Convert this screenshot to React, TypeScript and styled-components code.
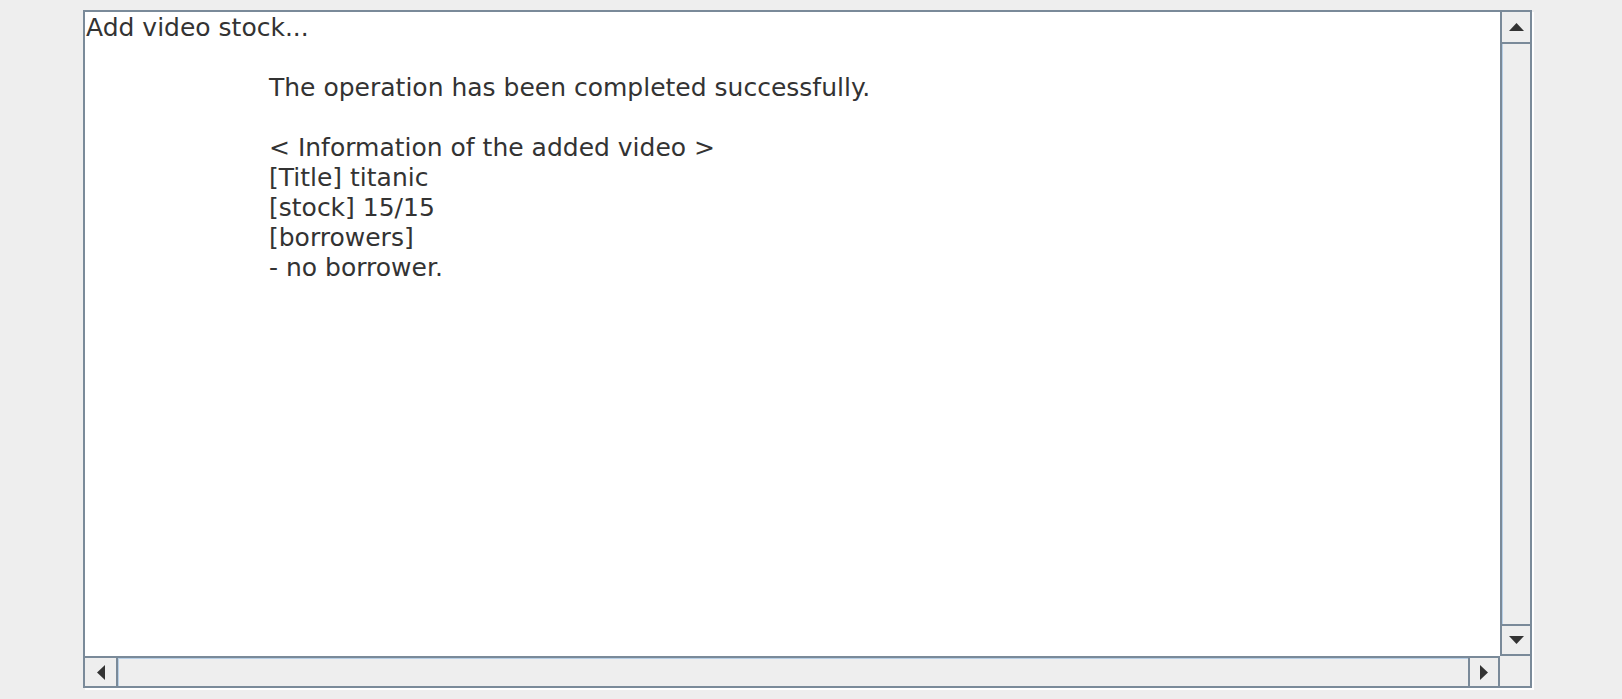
import React from "react";
import styled, { createGlobalStyle } from "styled-components";

const Global = createGlobalStyle`
  html, body {
    margin: 0;
    padding: 0;
    background: #eeeeee;
  }
  body {
    overflow: hidden;
  }
`;

const DARK = "#7a8a99";
const LIGHT = "#b8cfe5";
const INK = "#333333";

const Page = styled.div`
  width: 1622px;
  height: 699px;
  box-sizing: border-box;
  padding: 10px 0 0 83px;
  background: #eeeeee;
`;

const ScrollPane = styled.div`
  width: 1449px;
  height: 678px;
  box-sizing: border-box;
  border: 2px solid ${DARK};
  box-shadow: 2px 2px 0 #ffffff;
  display: grid;
  grid-template-columns: 1fr 30px;
  grid-template-rows: 1fr 30px;
  background: #eeeeee;
`;

const Viewport = styled.div`
  background: #ffffff;
  overflow: hidden;
  padding: 1px 0 0 1px;
  font-family: "DejaVu Sans", "Liberation Sans", sans-serif;
  font-size: 25px;
  line-height: 30px;
  color: ${INK};
`;

const Line = styled.div<{ $indent?: boolean }>`
  height: 30px;
  white-space: pre;
  padding-left: ${(p) => (p.$indent ? "183px" : "0")};
`;

const VBar = styled.div`
  display: flex;
  flex-direction: column;
  border-left: 2px solid ${DARK};
  min-height: 0;
`;

const HBar = styled.div`
  display: flex;
  flex-direction: row;
  border-top: 2px solid ${DARK};
`;

const ArrowButton = styled.div<{ $side: "top" | "bottom" | "left" | "right" }>`
  display: flex;
  align-items: center;
  justify-content: center;
  background: #eeeeee;
  box-sizing: border-box;
  ${(p) =>
    p.$side === "top"
      ? `border-bottom: 2px solid ${DARK}; flex: 0 0 32px;`
      : p.$side === "bottom"
      ? `border-top: 2px solid ${DARK}; border-bottom: 2px solid ${DARK}; flex: 0 0 32px;`
      : p.$side === "left"
      ? `border-right: 2px solid ${DARK}; flex: 0 0 33px;`
      : `border-left: 2px solid ${DARK}; border-right: 2px solid ${DARK}; flex: 0 0 32px;`}
`;

const Track = styled.div<{ $vertical?: boolean }>`
  flex: 1 1 auto;
  background: #eeeeee;
  box-shadow: ${(p) =>
    p.$vertical ? `inset 1px 0 0 ${LIGHT}` : `inset 1px 0 0 ${LIGHT}, inset 0 1px 0 ${LIGHT}`};
`;

const Corner = styled.div`
  background: #eeeeee;
`;

const Arrow = ({ dir }: { dir: "up" | "down" | "left" | "right" }) => {
  const horiz = dir === "up" || dir === "down";
  const w = horiz ? 15 : 8;
  const h = horiz ? 8 : 15;
  const pts =
    dir === "up"
      ? "7.5,0 15,8 0,8"
      : dir === "down"
      ? "0,0 15,0 7.5,8"
      : dir === "left"
      ? "8,0 8,15 0,7.5"
      : "0,0 8,7.5 0,15";
  return (
    <svg width={w} height={h} viewBox={`0 0 ${w} ${h}`} style={{ display: "block" }}>
      <polygon points={pts} fill={INK} />
    </svg>
  );
};

const lines: { text: string; indent?: boolean }[] = [
  { text: "Add video stock..." },
  { text: "" },
  { text: "The operation has been completed successfully.", indent: true },
  { text: "" },
  { text: "< Information of the added video >", indent: true },
  { text: "[Title] titanic", indent: true },
  { text: "[stock] 15/15", indent: true },
  { text: "[borrowers]", indent: true },
  { text: "- no borrower.", indent: true },
];

export default function App() {
  return (
    <>
      <Global />
      <Page>
        <ScrollPane>
          <Viewport>
            {lines.map((l, i) => (
              <Line key={i} $indent={l.indent}>
                {l.text}
              </Line>
            ))}
          </Viewport>
          <VBar>
            <ArrowButton $side="top">
              <Arrow dir="up" />
            </ArrowButton>
            <Track $vertical />
            <ArrowButton $side="bottom">
              <Arrow dir="down" />
            </ArrowButton>
          </VBar>
          <HBar>
            <ArrowButton $side="left">
              <Arrow dir="left" />
            </ArrowButton>
            <Track />
            <ArrowButton $side="right">
              <Arrow dir="right" />
            </ArrowButton>
          </HBar>
          <Corner />
        </ScrollPane>
      </Page>
    </>
  );
}
